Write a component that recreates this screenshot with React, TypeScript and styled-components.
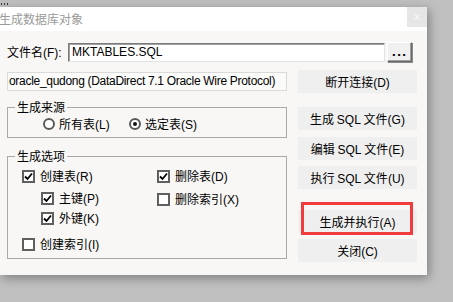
import React from "react";
import styled, { createGlobalStyle } from "styled-components";

const Global = createGlobalStyle`
  html, body { margin: 0; padding: 0; }
  body {
    background: #c0c0c0;
    width: 453px;
    height: 302px;
    overflow: hidden;
    font-family: "Noto Sans CJK SC", "Noto Sans", sans-serif;
    font-size: 12px;
    color: #000;
  }
`;

const TopStrip = styled.div`
  height: 7px;
  display: flex;
  align-items: flex-start;
  gap: 2px;
  padding: 3px 0 0 1px;
  box-sizing: border-box;
`;

const Dot = styled.span`
  width: 1px;
  height: 2px;
  background: #333;
`;

const Window = styled.div`
  width: 427px;
  background: #f8f7f5;
  box-shadow: 2px 3px 10px rgba(0, 0, 0, 0.35);
  display: flex;
  flex-direction: column;
`;

const TitleBar = styled.div`
  height: 24px;
  background: #ffffff;
  display: flex;
  align-items: flex-start;
  justify-content: space-between;
`;

const Title = styled.div`
  color: #9a9a9a;
  font-size: 12px;
  line-height: 24px;
  margin-left: -1px;
`;

const CloseBtn = styled.div`
  width: 20px;
  height: 20px;
  background: #e6e6e6;
  color: #f8f8f8;
  font-size: 11px;
  line-height: 19px;
  text-align: center;
  font-family: "DejaVu Sans", sans-serif;
`;

const Body = styled.div`
  padding: 11px 10px 13px 7px;
  display: flex;
  flex-direction: column;
  position: relative;
`;

const FileRow = styled.div`
  display: flex;
  align-items: center;
  height: 20px;
`;

const Label = styled.span`
  width: 61px;
  white-space: nowrap;
  line-height: 14px;
`;

const Input = styled.div`
  width: 317px;
  height: 19px;
  box-sizing: border-box;
  background: #ffffff;
  border-top: 1px solid #7a7a7a;
  border-left: 1px solid #7a7a7a;
  border-right: 1px solid #e3e3e3;
  border-bottom: 1px solid #e3e3e3;
  box-shadow: inset 1px 1px 0 #a0a0a0;
  padding: 0 3px;
  line-height: 17px;
  font-family: "Liberation Sans", sans-serif;
  font-size: 12px;
`;

const DotsBtn = styled.div`
  margin-left: 2px;
  width: 25px;
  height: 20px;
  box-sizing: border-box;
  background: #f0f0f0;
  border-top: 1px solid #ffffff;
  border-left: 1px solid #ffffff;
  border-right: 1px solid #696969;
  border-bottom: 1px solid #696969;
  box-shadow: inset -1px -1px 0 #a0a0a0, 1px 1px 0 #8a8a8a;
  font-weight: bold;
  font-family: "DejaVu Sans", sans-serif;
  font-size: 11px;
  text-align: center;
  line-height: 20px;
  letter-spacing: 1px;
`;

const Columns = styled.div`
  display: flex;
  gap: 11px;
  margin-top: 8px;
`;

const LeftCol = styled.div`
  width: 280px;
  display: flex;
  flex-direction: column;
  padding-top: 2px;
`;

const RightCol = styled.div`
  width: 119px;
  display: flex;
  flex-direction: column;
`;

const ConnBox = styled.div`
  height: 19px;
  box-sizing: border-box;
  border: 1px solid #dadada;
  background: #fbfbfa;
  line-height: 17px;
  padding-left: 1px;
  font-family: "Liberation Sans", sans-serif;
  font-size: 12px;
  letter-spacing: -0.3px;
  white-space: nowrap;
`;

const Group = styled.fieldset<{ $mt: number; $pb: number }>`
  margin: ${(p) => p.$mt}px 0 0 0;
  padding: 0 0 ${(p) => p.$pb}px 7px;
  border: 1px solid #a9a9a9;
  min-width: 0;
`;

const Legend = styled.legend`
  padding: 0 2px;
  line-height: 14px;
  font-size: 12px;
`;

const RadioRow = styled.div`
  display: flex;
  align-items: center;
  margin-top: 3px;
  padding-left: 28px;
  height: 14px;
`;

const RadioItem = styled.label<{ $w?: number }>`
  display: flex;
  align-items: center;
  gap: 4px;
  width: ${(p) => (p.$w ? `${p.$w}px` : "auto")};
  line-height: 14px;
  white-space: nowrap;
`;

const RadioCircle = styled.span<{ $on?: boolean }>`
  width: 12px;
  height: 12px;
  box-sizing: border-box;
  border-radius: 50%;
  border: 2px solid #5a5a5a;
  background: #fff;
  display: flex;
  align-items: center;
  justify-content: center;
  &::after {
    content: "";
    display: ${(p) => (p.$on ? "block" : "none")};
    width: 4px;
    height: 4px;
    border-radius: 50%;
    background: #111;
  }
`;

const OptGrid = styled.div`
  display: flex;
  padding: 6px 0 0 7px;
`;

const OptCol = styled.div<{ $w?: number }>`
  display: flex;
  flex-direction: column;
  width: ${(p) => (p.$w ? `${p.$w}px` : "auto")};
`;

const CheckItem = styled.label<{ $mt?: number; $indent?: number }>`
  display: flex;
  align-items: center;
  gap: 5px;
  height: 14px;
  line-height: 14px;
  margin-top: ${(p) => p.$mt ?? 0}px;
  margin-left: ${(p) => p.$indent ?? 0}px;
  white-space: nowrap;
`;

const CheckBox = styled.span`
  width: 13px;
  height: 13px;
  box-sizing: border-box;
  border: 2px solid #5f5f5f;
  background: #fff;
  display: flex;
  align-items: center;
  justify-content: center;
`;

const Btn = styled.div<{ $mt: number }>`
  height: 23px;
  margin-top: ${(p) => p.$mt}px;
  background: #efefef;
  display: flex;
  align-items: center;
  justify-content: center;
  font-size: 12px;
  white-space: pre;
`;

const Latin = styled.span`
  font-family: "Liberation Sans", sans-serif;
  font-size: 12px;
`;

const Highlight = styled.div`
  position: absolute;
  left: 301px;
  top: 171px;
  width: 112px;
  height: 33px;
  box-sizing: border-box;
  border: 3px solid #f03c3c;
  pointer-events: none;
`;

const Check = () => (
  <svg width="9" height="9" viewBox="0 0 9 9">
    <path d="M1 4.5 L3.5 7 L8 1.5" stroke="#000" strokeWidth="1.8" fill="none" />
  </svg>
);

const Opt = ({
  text,
  m,
  on,
  mt,
  indent,
}: {
  text: string;
  m: string;
  on?: boolean;
  mt?: number;
  indent?: number;
}) => (
  <CheckItem $mt={mt} $indent={indent}>
    <CheckBox>{on && <Check />}</CheckBox>
    <span>
      {text}
      <Latin>({m})</Latin>
    </span>
  </CheckItem>
);

const SqlLabel = ({ verb, m }: { verb: string; m: string }) => (
  <span>
    {verb} <Latin>SQL</Latin> 文件<Latin>({m})</Latin>
  </span>
);

export default function App() {
  return (
    <>
      <Global />
      <TopStrip>
        <Dot />
        <Dot />
        <Dot />
      </TopStrip>
      <Window>
        <TitleBar>
          <Title>生成数据库对象</Title>
          <CloseBtn>x</CloseBtn>
        </TitleBar>
        <Body>
          <FileRow>
            <Label>
              文件名<Latin>(F):</Latin>
            </Label>
            <Input>MKTABLES.SQL</Input>
            <DotsBtn>...</DotsBtn>
          </FileRow>
          <Columns>
            <LeftCol>
              <ConnBox>oracle_qudong (DataDirect 7.1 Oracle Wire Protocol)</ConnBox>
              <Group $mt={9} $pb={6}>
                <Legend>生成来源</Legend>
                <RadioRow>
                  <RadioItem $w={86}>
                    <RadioCircle />
                    <span>
                      所有表<Latin>(L)</Latin>
                    </span>
                  </RadioItem>
                  <RadioItem>
                    <RadioCircle $on />
                    <span>
                      选定表<Latin>(S)</Latin>
                    </span>
                  </RadioItem>
                </RadioRow>
              </Group>
              <Group $mt={11} $pb={7}>
                <Legend>生成选项</Legend>
                <OptGrid>
                  <OptCol $w={135}>
                    <Opt text="创建表" m="R" on />
                    <Opt text="主键" m="P" on mt={8} indent={19} />
                    <Opt text="外键" m="K" on mt={6} indent={19} />
                    <Opt text="创建索引" m="I" mt={12} />
                  </OptCol>
                  <OptCol>
                    <Opt text="删除表" m="D" on />
                    <Opt text="删除索引" m="X" mt={9} />
                  </OptCol>
                </OptGrid>
              </Group>
            </LeftCol>
            <RightCol>
              <Btn $mt={0}>
                <span>
                  断开连接<Latin>(D)</Latin>
                </span>
              </Btn>
              <Btn $mt={14}>
                <SqlLabel verb="生成" m="G" />
              </Btn>
              <Btn $mt={7}>
                <SqlLabel verb="编辑" m="E" />
              </Btn>
              <Btn $mt={6}>
                <SqlLabel verb="执行" m="U" />
              </Btn>
              <Btn $mt={21}>
                <span>
                  生成并执行<Latin>(A)</Latin>
                </span>
              </Btn>
              <Btn $mt={6}>
                <span>
                  关闭<Latin>(C)</Latin>
                </span>
              </Btn>
            </RightCol>
          </Columns>
          <Highlight />
        </Body>
      </Window>
    </>
  );
}
